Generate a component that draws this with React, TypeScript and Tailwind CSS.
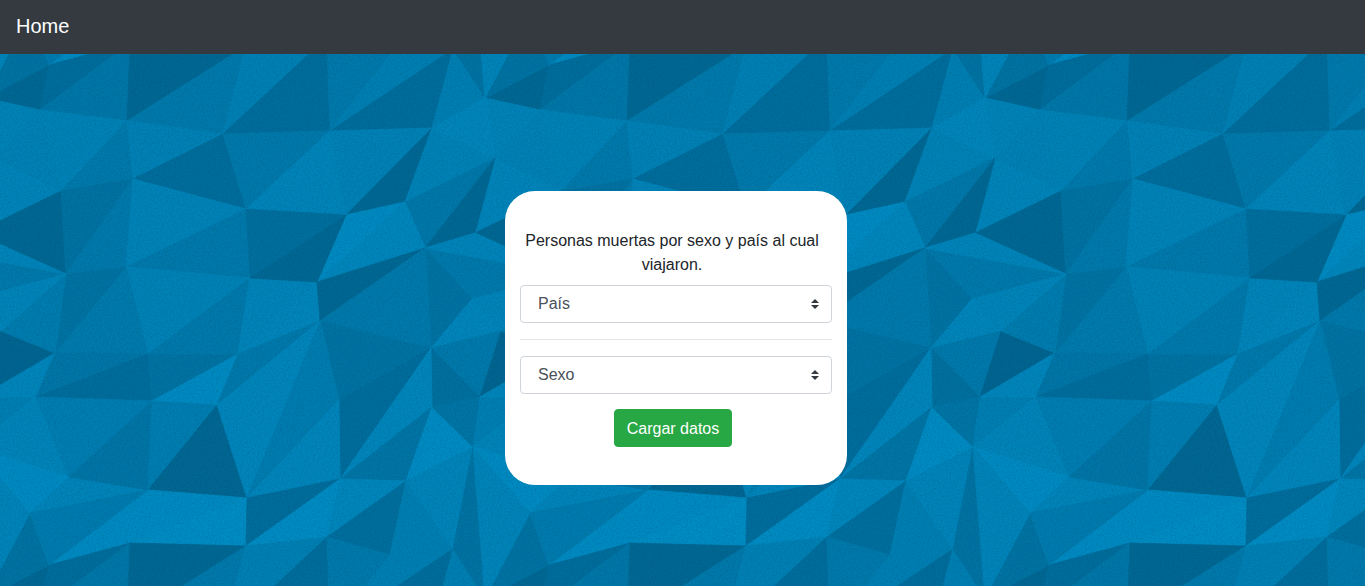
import React from "react";

type Point = [number, number];

const TILE = 500;

const POINTS: Record<string, Point> = {
  a: [49, 65], b: [40, 110], c: [127, 121], d: [133, 179], e: [61, 191],
  p: [485, 98], g: [30, 513], k: [130, 43], l: [246, 46], m: [223, 134],
  n: [327, 37], q: [330, 131], r: [246, 209], s: [495, 158], u: [475, 233],
  v: [66, 274], w: [425, 248], x: [472, 299], y: [55, 353], z: [501, 331],
  f1: [126, 267], h1: [148, 354], i1: [36, 397], j1: [152, 401], k1: [250, 278],
  l1: [238, 354], m1: [217, 405], n1: [317, 282], o1: [480, 397], q1: [320, 321],
  r1: [346, 215], s1: [405, 202], t1: [431, 348], a2: [432, 128], b2: [390, 55],
  c2: [453, 49], d2: [473, 447], e2: [432, 407], f2: [339, 400], g2: [340, 479],
  h2: [406, 481], j2: [69, 477], k2: [148, 490], l2: [247, 498],
};

// Each facet lists its three corners and its brightness, from 0 (dark) to 8 (light).
const FACETS: [string, string, string, number][] = [
  ["p", "a", "b", 1], ["p", "a", "g", 3], ["g", "a", "k2", 4], ["a", "k2", "k", 7],
  ["a", "b", "k", 2], ["b", "c", "k", 3.7], ["k", "c", "l", 1], ["c", "m", "l", 4],
  ["l", "m", "n", 5.3], ["m", "q", "n", 2], ["n", "q", "b2", 4], ["q", "b2", "c2", 5],
  ["q", "a2", "c2", 2], ["a2", "c2", "p", 5], ["c2", "p", "d2", 3], ["p", "d2", "g", 6],
  ["b", "c", "e", 5.6], ["p", "b", "s", 5.8], ["b", "e", "s", 5.4], ["s", "e", "u", 6],
  ["c", "d", "e", 4], ["c", "m", "d", 5.4], ["d", "m", "r", 2], ["m", "r", "q", 4],
  ["q", "r", "r1", 5.9], ["q", "a2", "r1", 5.5], ["a2", "r1", "s1", 1], ["a2", "s", "s1", 5.6],
  ["a2", "p", "s", 6.2], ["s1", "s", "w", 3.8], ["s", "u", "w", 1], ["r1", "n1", "s1", 7],
  ["n1", "s1", "w", 6.4], ["u", "e", "v", 1], ["e", "d", "v", 2.8], ["d", "v", "f1", 4],
  ["d", "f1", "r", 5.8], ["f1", "r", "k1", 4], ["f1", "k1", "h1", 5.6], ["f1", "h1", "y", 4.2],
  ["v", "f1", "y", 3], ["v", "y", "z", 4.5], ["v", "x", "z", 6], ["w", "v", "x", 4],
  ["u", "v", "w", 6], ["w", "x", "t1", 3], ["x", "t1", "z", 6.2], ["t1", "z", "o1", 4],
  ["t1", "o1", "e2", 2.4], ["z", "y", "o1", 0.5], ["y", "i1", "o1", 6.2], ["y", "h1", "i1", 3.5],
  ["h1", "j1", "i1", 2], ["h1", "l1", "j1", 3], ["k1", "l1", "h1", 4], ["l1", "m1", "j1", 7],
  ["k1", "n1", "l1", 6], ["n1", "q1", "l1", 6.2], ["l1", "q1", "m1", 4], ["r", "k1", "r1", 2.3],
  ["r1", "k1", "n1", 1], ["n1", "q1", "w", 1], ["q1", "w", "t1", 4], ["q1", "t1", "f2", 3],
  ["f2", "t1", "g2", 2], ["t1", "e2", "g2", 6.2], ["e2", "g2", "h2", 3.3], ["e2", "d2", "h2", 7.2],
  ["e2", "d2", "o1", 3.3], ["o1", "d2", "i1", 5], ["d2", "i1", "j2", 6], ["i1", "j1", "j2", 4.8],
  ["d2", "j2", "g", 7], ["j2", "g", "k2", 6], ["j2", "j1", "k2", 3.4], ["j1", "m1", "k2", 4.8],
  ["m1", "l2", "k2", 0.8], ["k2", "l2", "k", 7], ["l2", "l", "k", 7.3], ["m1", "q1", "l2", 6.2],
  ["q1", "f2", "l2", 4.6], ["f2", "l2", "g2", 6.2], ["l2", "g2", "l", 2], ["g2", "l", "n", 7.2],
  ["g2", "h2", "n", 6.3], ["h2", "b2", "n", 2.3], ["h2", "b2", "c2", 5], ["h2", "d2", "c2", 6],
  ["a", "g", "k2", 4.4],
];

const shade = (level: number) =>
  `rgb(0, ${Math.round(97 + 5.7 * level)}, ${Math.round(140 + 7.4 * level)})`;

// Moves a coordinate by whole tiles until it lies nearest to the anchor.
const near = (value: number, anchor: number) =>
  value - TILE * Math.round((value - anchor) / TILE);

const facetPoints = (names: string[]) => {
  let [px, py] = POINTS[names[0]];
  return names
    .map((name) => {
      px = near(POINTS[name][0], px);
      py = near(POINTS[name][1], py);
      return `${px},${py}`;
    })
    .join(" ");
};

const SHIFTS = [-TILE, 0, TILE];

function Backdrop() {
  return (
    <svg className="absolute inset-0 -z-10 h-full w-full" aria-hidden="true">
      <defs>
        <g id="facets">
          {FACETS.map(([a, b, c, level]) => (
            <polygon
              key={a + b + c}
              points={facetPoints([a, b, c])}
              fill={shade(level)}
              stroke={shade(level)}
              strokeWidth="0.8"
            />
          ))}
        </g>
        <pattern id="tile" width={TILE} height={TILE} patternUnits="userSpaceOnUse">
          <rect width={TILE} height={TILE} fill={shade(3)} />
          {SHIFTS.map((dx) =>
            SHIFTS.map((dy) => <use key={`${dx} ${dy}`} href="#facets" x={dx} y={dy} />),
          )}
        </pattern>
        <filter id="grain" x="0" y="0" width="100%" height="100%" colorInterpolationFilters="sRGB">
          <feTurbulence type="fractalNoise" baseFrequency="0.6" numOctaves="2" seed="3" />
          <feColorMatrix values="0 0 0 0 0  0 0 0 0 0.25  0 0 0 0 0.35  1.6 0 0 0 -0.7" />
        </filter>
      </defs>
      <rect width="100%" height="100%" fill="url(#tile)" />
      <rect width="100%" height="100%" filter="url(#grain)" opacity="0.3" />
    </svg>
  );
}

function Select({ label, options }: { label: string; options: string[] }) {
  return (
    <div className="relative">
      <select
        aria-label={label}
        defaultValue=""
        className="block h-[38px] w-full appearance-none rounded border border-[#ced4da] bg-white pr-7 pl-[17px] text-base text-[#495057]"
      >
        <option value="">{label}</option>
        {options.map((option) => (
          <option key={option}>{option}</option>
        ))}
      </select>
      <svg
        viewBox="0 0 4 5"
        className="pointer-events-none absolute top-3.5 right-[13px] h-2.5 w-2"
        aria-hidden="true"
      >
        <path fill="#343a40" d="M2 0L0 2h4zm0 5L0 3h4z" />
      </svg>
    </div>
  );
}

export default function App() {
  return (
    <div className="relative isolate flex min-h-screen flex-col font-['Liberation_Sans',Arial,sans-serif] text-base text-[#212529]">
      <Backdrop />
      <nav className="flex h-[54px] items-center bg-[#343a40] px-4 pb-0.5">
        <a href="#" className="text-xl text-white">
          Home
        </a>
      </nav>
      <main className="flex justify-center pt-[137px] pr-[13px]">
        <form
          className="w-[342px] rounded-[30px] bg-white px-[15px] py-[38px]"
          onSubmit={(event) => event.preventDefault()}
        >
          <p className="mb-2 pr-2 text-center">
            Personas muertas por sexo y país al cual viajaron.
          </p>
          <Select label="País" options={["México", "España", "Italia"]} />
          <hr className="my-4 border-t border-black/10" />
          <Select label="Sexo" options={["Mujer", "Hombre"]} />
          <div className="mt-[15px] flex justify-center pr-1.5">
            <button
              type="submit"
              className="h-[38px] rounded border border-[#28a745] bg-[#28a745] px-3 pt-0.5 text-white"
            >
              Cargar datos
            </button>
          </div>
        </form>
      </main>
    </div>
  );
}
